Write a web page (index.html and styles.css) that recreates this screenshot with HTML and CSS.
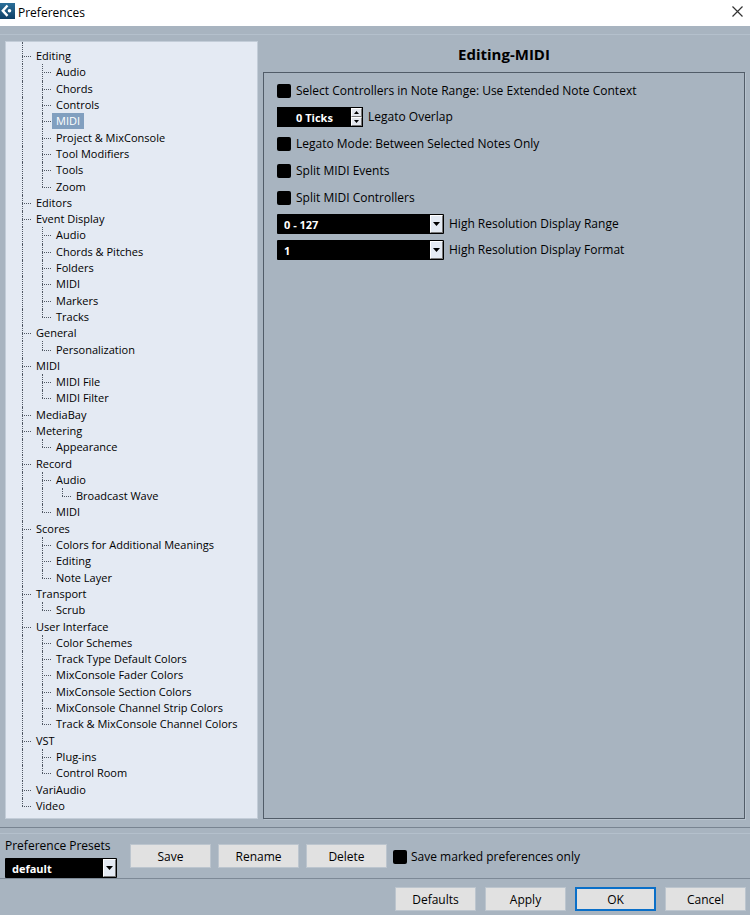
FILE: index.html
```html
<!DOCTYPE html>
<html lang="en">
<head>
  <meta charset="UTF-8">
  <meta name="viewport" content="width=device-width, initial-scale=1.0">
  <title>Preferences</title>
  <link rel="stylesheet" href="styles.css">
</head>
<body>
  <header class="titlebar">
    <svg class="logo" width="15" height="16" viewBox="0 0 15 16">
      <defs>
        <linearGradient id="logoBg" x1="0" y1="0" x2="0" y2="1">
          <stop offset="0" stop-color="#2b6f99"/>
          <stop offset="1" stop-color="#0e3f66"/>
        </linearGradient>
      </defs>
      <rect width="15" height="16" fill="url(#logoBg)"/>
      <path d="M7.500 2.500L2.800 7.700l4.700 5.200" fill="none" stroke="#fff" stroke-width="2.400"/>
      <circle cx="9.500" cy="7.700" r="1.800" fill="#fff"/>
    </svg>
    <span class="caption">Preferences</span>
    <button class="close" aria-label="Close">
      <svg width="11" height="11" viewBox="0 0 11 11"><path d="M.5.5l10 10M10.500.5l-10 10" fill="none" stroke="#333" stroke-width="1.200"/></svg>
    </button>
  </header>

  <main class="content">
    <ul class="tree">
      <li><i class="tee"></i><span>Editing</span></li>
      <li><i class="bar"></i><i class="tee"></i><span>Audio</span></li>
      <li><i class="bar"></i><i class="tee"></i><span>Chords</span></li>
      <li><i class="bar"></i><i class="tee"></i><span>Controls</span></li>
      <li><i class="bar"></i><i class="tee"></i><span class="selected">MIDI</span></li>
      <li><i class="bar"></i><i class="tee"></i><span>Project &amp; MixConsole</span></li>
      <li><i class="bar"></i><i class="tee"></i><span>Tool Modifiers</span></li>
      <li><i class="bar"></i><i class="tee"></i><span>Tools</span></li>
      <li><i class="bar"></i><i class="tee end"></i><span>Zoom</span></li>
      <li><i class="tee"></i><span>Editors</span></li>
      <li><i class="tee"></i><span>Event Display</span></li>
      <li><i class="bar"></i><i class="tee"></i><span>Audio</span></li>
      <li><i class="bar"></i><i class="tee"></i><span>Chords &amp; Pitches</span></li>
      <li><i class="bar"></i><i class="tee"></i><span>Folders</span></li>
      <li><i class="bar"></i><i class="tee"></i><span>MIDI</span></li>
      <li><i class="bar"></i><i class="tee"></i><span>Markers</span></li>
      <li><i class="bar"></i><i class="tee end"></i><span>Tracks</span></li>
      <li><i class="tee"></i><span>General</span></li>
      <li><i class="bar"></i><i class="tee end"></i><span>Personalization</span></li>
      <li><i class="tee"></i><span>MIDI</span></li>
      <li><i class="bar"></i><i class="tee"></i><span>MIDI File</span></li>
      <li><i class="bar"></i><i class="tee end"></i><span>MIDI Filter</span></li>
      <li><i class="tee"></i><span>MediaBay</span></li>
      <li><i class="tee"></i><span>Metering</span></li>
      <li><i class="bar"></i><i class="tee end"></i><span>Appearance</span></li>
      <li><i class="tee"></i><span>Record</span></li>
      <li><i class="bar"></i><i class="tee"></i><span>Audio</span></li>
      <li><i class="bar"></i><i class="bar"></i><i class="tee end"></i><span>Broadcast Wave</span></li>
      <li><i class="bar"></i><i class="tee end"></i><span>MIDI</span></li>
      <li><i class="tee"></i><span>Scores</span></li>
      <li><i class="bar"></i><i class="tee"></i><span>Colors for Additional Meanings</span></li>
      <li><i class="bar"></i><i class="tee"></i><span>Editing</span></li>
      <li><i class="bar"></i><i class="tee end"></i><span>Note Layer</span></li>
      <li><i class="tee"></i><span>Transport</span></li>
      <li><i class="bar"></i><i class="tee end"></i><span>Scrub</span></li>
      <li><i class="tee"></i><span>User Interface</span></li>
      <li><i class="bar"></i><i class="tee"></i><span>Color Schemes</span></li>
      <li><i class="bar"></i><i class="tee"></i><span>Track Type Default Colors</span></li>
      <li><i class="bar"></i><i class="tee"></i><span>MixConsole Fader Colors</span></li>
      <li><i class="bar"></i><i class="tee"></i><span>MixConsole Section Colors</span></li>
      <li><i class="bar"></i><i class="tee"></i><span>MixConsole Channel Strip Colors</span></li>
      <li><i class="bar"></i><i class="tee end"></i><span>Track &amp; MixConsole Channel Colors</span></li>
      <li><i class="tee"></i><span>VST</span></li>
      <li><i class="bar"></i><i class="tee"></i><span>Plug-ins</span></li>
      <li><i class="bar"></i><i class="tee end"></i><span>Control Room</span></li>
      <li><i class="tee"></i><span>VariAudio</span></li>
      <li><i class="tee end"></i><span>Video</span></li>
    </ul>

    <section class="page">
      <h1>Editing-MIDI</h1>
      <div class="panel">
        <label class="option"><input type="checkbox" class="check">Select Controllers in Note Range: Use Extended Note Context</label>
        <div class="option control">
          <div class="spinner">
            <input type="text" id="overlap" value="0 Ticks">
            <div class="steps">
              <button aria-label="Increase"><svg width="5" height="3" viewBox="0 0 5 3"><path d="M0 3L2.500 0L5 3z"/></svg></button>
              <button aria-label="Decrease"><svg width="5" height="3" viewBox="0 0 5 3"><path d="M0 0L2.500 3L5 0z"/></svg></button>
            </div>
          </div>
          <label for="overlap">Legato Overlap</label>
        </div>
        <label class="option"><input type="checkbox" class="check">Legato Mode: Between Selected Notes Only</label>
        <label class="option"><input type="checkbox" class="check">Split MIDI Events</label>
        <label class="option"><input type="checkbox" class="check">Split MIDI Controllers</label>
        <div class="option control">
          <div class="dropdown wide">
            <select id="range"><option>0 - 127</option></select>
            <span class="arrow"><svg width="7" height="4" viewBox="0 0 7 4"><path d="M0 0h7L3.500 4z"/></svg></span>
          </div>
          <label for="range">High Resolution Display Range</label>
        </div>
        <div class="option control">
          <div class="dropdown wide">
            <select id="format"><option>1</option></select>
            <span class="arrow"><svg width="7" height="4" viewBox="0 0 7 4"><path d="M0 0h7L3.500 4z"/></svg></span>
          </div>
          <label for="format">High Resolution Display Format</label>
        </div>
      </div>
    </section>
  </main>

  <section class="presets">
    <div class="preset">
      <label for="preset">Preference Presets</label>
      <div class="dropdown">
        <select id="preset"><option>default</option></select>
        <span class="arrow"><svg width="7" height="4" viewBox="0 0 7 4"><path d="M0 0h7L3.500 4z"/></svg></span>
      </div>
    </div>
    <div class="buttons">
      <button class="btn">Save</button>
      <button class="btn">Rename</button>
      <button class="btn">Delete</button>
    </div>
    <label class="marked"><input type="checkbox" class="check">Save marked preferences only</label>
  </section>

  <footer class="actions">
    <button class="btn">Defaults</button>
    <button class="btn">Apply</button>
    <button class="btn primary">OK</button>
    <button class="btn">Cancel</button>
  </footer>
</body>
</html>
```
FILE: styles.css
```css
* { box-sizing: border-box; }
body {
  margin: 0;
  min-height: 100vh;
  display: flex;
  flex-direction: column;
  font-family: "Open Sans", "Noto Sans", sans-serif;
  font-size: 12px;
  line-height: 16px;
  color: #000;
  background: #a8b4c0;
}
button, input, select {
  font-family: inherit;
  color: inherit;
}

.titlebar {
  display: flex;
  align-items: center;
  height: 26px;
  padding: 0 7px 4px 0;
  background: #fff;
}
.caption {
  flex: 1;
  margin-left: 3px;
  padding-top: 4px;
}
.close {
  display: flex;
  padding: 0;
  border: none;
  background: none;
}

.content {
  flex: 1;
  display: flex;
  gap: 5px;
  padding: 6px 5px 8px;
  margin-top: 8px;
  border-top: 1px solid #b4c0cc;
}
.tree {
  flex: 0 0 253px;
  display: grid;
  grid-auto-rows: 1fr;
  margin: 0;
  padding: 6px 0 4px 16px;
  list-style: none;
  background: #e4eaf3;
  border: 1px solid #c3cdd8;
  font-size: 11px;
}
.tree li {
  display: flex;
}
.tree span {
  align-self: center;
  line-height: 16px;
  padding: 0 4px;
  margin-left: -10px;
  white-space: nowrap;
}
.tree .selected {
  color: #fff;
  background: #819fbf;
}
/* dotted guide lines in front of the entries */
.bar, .tee {
  flex: 0 0 20px;
  position: relative;
}
.bar::before, .tee::before {
  content: "";
  position: absolute;
  left: 0;
  top: 0;
  bottom: 0;
  border-left: 1px dotted #4f5763;
}
.tree li:first-child .tee::before { top: -6px; }
.tee.end::before { bottom: 50%; }
.tee::after {
  content: "";
  position: absolute;
  left: 0;
  top: 50%;
  width: 9px;
  border-top: 1px dotted #4f5763;
}

.page {
  flex: 1;
  display: flex;
  flex-direction: column;
}
h1 {
  margin: 0;
  height: 31px;
  line-height: 27px;
  font-size: 15px;
  text-align: center;
}
.panel {
  flex: 1;
  padding: 4px 13px;
  border: 1px solid #515c68;
  box-shadow: 1px 1px #b7c2cd;
}
.option {
  display: flex;
  align-items: center;
  gap: 5px;
  height: 27px;
}
.control { height: 26px; }
.check {
  appearance: none;
  width: 14px;
  height: 14px;
  margin: 0;
  border-radius: 2px;
  background: #000;
}
.check:checked { background: #000 radial-gradient(#fff 3px, #000 4px); }

.spinner {
  display: flex;
  width: 86px;
  height: 20px;
  padding: 1px;
  background: #000;
}
.spinner input {
  flex: 1;
  min-width: 0;
  padding: 0;
  border: none;
  background: #000;
  color: #fff;
  font-size: 11px;
  font-weight: bold;
  text-align: center;
}
.steps {
  display: flex;
  flex-direction: column;
  width: 11px;
}
.steps button {
  flex: 1;
  display: flex;
  align-items: center;
  justify-content: center;
  padding: 0;
  background: #e4e7ee;
  border: 1px solid;
  border-color: #fff #777 #777 #fff;
}

.dropdown {
  position: relative;
  height: 20px;
}
.wide { width: 167px; }
.dropdown select {
  appearance: none;
  display: block;
  width: 100%;
  height: 20px;
  padding: 0 20px 0 7px;
  border: none;
  border-radius: 1px;
  background: #000;
  color: #fff;
  font-size: 11px;
  font-weight: bold;
}
.arrow {
  position: absolute;
  top: 1px;
  right: 1px;
  bottom: 1px;
  width: 13px;
  display: flex;
  align-items: center;
  justify-content: center;
  background: #e4eaf3;
  border: 1px solid;
  border-color: #fff #777 #777 #fff;
  pointer-events: none;
}

.presets {
  display: flex;
  align-items: flex-start;
  height: 52px;
  padding: 10px 5px 0;
  border-top: 1px solid #788491;
  border-bottom: 1px solid #7d8996;
  background: linear-gradient(#a8b4c0 5px, #b4c0cc 5px, #b4c0cc 6px, #a8b4c0 6px);
}
.preset { width: 112px; }
.preset label {
  display: block;
  height: 20px;
  white-space: nowrap;
}
.buttons {
  display: flex;
  gap: 7px;
  margin: 6px 6px 0 13px;
}
.marked {
  display: flex;
  align-items: center;
  gap: 4px;
  height: 24px;
  margin-top: 7px;
}
.btn {
  width: 81px;
  height: 24px;
  padding: 0;
  font-size: 12px;
  background: #e1e1e1;
  border: 1px solid #b5b9be;
  outline: 1px solid #bcc5ce;
  outline-offset: -1px;
}
.primary {
  border: 2px solid #0a6fc8;
  outline: none;
}
.actions {
  display: flex;
  justify-content: flex-end;
  gap: 9px;
  padding: 8px 4px 4px;
}
```
